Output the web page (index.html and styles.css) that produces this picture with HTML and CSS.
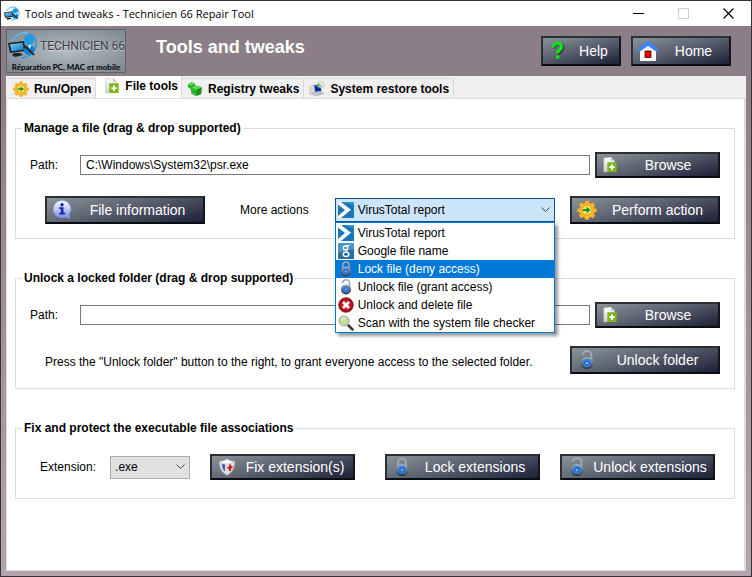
FILE: index.html
```html
<!DOCTYPE html>
<html lang="en">
<head>
    <meta charset="UTF-8">
    <meta name="viewport" content="width=device-width, initial-scale=1.0">
    <title>Tools and tweaks - Technicien 66 Repair Tool</title>
    <link rel="stylesheet" href="styles.css">
</head>
<body>
    <!-- shared icons -->
    <svg class="sprite" aria-hidden="true">
        <defs>
            <linearGradient id="g-blue" x1="0" y1="0" x2="1" y2="1"><stop offset="0" stop-color="#7cd4fc"/><stop offset="1" stop-color="#0a6cb8"/></linearGradient>
            <linearGradient id="g-steel" x1="0" y1="0" x2="0" y2="1"><stop offset="0" stop-color="#aab2ba"/><stop offset="1" stop-color="#2c3238"/></linearGradient>
            <linearGradient id="g-page" x1="0" y1="0" x2="0" y2="1"><stop offset="0" stop-color="#fff"/><stop offset="1" stop-color="#cfcfcf"/></linearGradient>
            <linearGradient id="g-info" x1="0" y1="0" x2="0" y2="1"><stop offset="0" stop-color="#fff"/><stop offset="1" stop-color="#7088e8"/></linearGradient>
            <radialGradient id="g-red"><stop offset="0" stop-color="#e83030"/><stop offset="1" stop-color="#a00c14"/></radialGradient>
        </defs>
        <symbol id="i-logo" viewBox="0 0 30 30">
            <path d="M5 9C9-1 27-1 28 12c0 9-6 14-14 15" fill="none" stroke="#1c9be6" stroke-width="1.400"/>
            <path d="M4 10C8 3 14 1 20 2" fill="none" stroke="#8cd4fa" stroke-width="1"/>
            <path d="M0 12l16-2 2 10-16 2z" fill="#16222c"/>
            <path d="M2 13.300l12.500-1.500 1.500 7-12.500 1.500z" fill="url(#g-blue)"/>
            <path d="M6 22h6l3 2-8 2-3-2z" fill="#16222c"/>
            <circle cx="21" cy="9" r="5" fill="#1c9be6"/>
            <path d="M16 21c0-5 2-7 5-7s6 2 6 5c-2 3-5 5-8 5z" fill="#1280d0"/>
            <path d="M17 15l9 9" stroke="#222c34" stroke-width="2"/>
            <path d="M20 14l1.500 4 2-4z" fill="#d8f0ff"/>
        </symbol>
        <symbol id="i-gear" viewBox="0 0 20 20">
            <path d="M8.300 1h3.400l.5 2.300 1.500.6 2-1.300 2.300 2.300-1.300 2 .6 1.500 2.200.5v2.800l-2.200.6-.6 1.500 1.300 2-2.300 2.300-2-1.300-1.500.6-.5 2.100H8.300l-.5-2.100-1.500-.6-2 1.300L2 15.800l1.300-2-.6-1.500L.5 11.700V8.900l2.200-.5.6-1.500-1.300-2 2.300-2.300 2 1.300 1.500-.6z" fill="#f8b82c" stroke="#e89a28" stroke-width=".6"/>
            <circle cx="10" cy="10" r="5" fill="#ffe35a" stroke="#e8a020"/>
            <path d="M6 9h3.500V6.800L13.800 10l-4.300 3.200V11H6z" fill="#16903c"/>
        </symbol>
        <symbol id="i-page" viewBox="0 0 16 18">
            <path d="M1 1l8-1 4 4v12l-12 1z" fill="url(#g-page)" stroke="#b4b4b4" stroke-width=".6"/>
            <path d="M9 0l.5 4H13z" fill="#bbb"/>
            <rect x="5" y="6" width="10.500" height="11" rx="1" fill="#7fb51a"/>
            <path d="M10.250 8.500v6M7.250 11.500h6" stroke="#fff" stroke-width="2"/>
        </symbol>
        <symbol id="i-cubes" viewBox="0 0 18 18">
            <path d="M1 4l4-3 4 2v4L5 9 1 7z" fill="#2aa82a"/>
            <path d="M1 4l4-3 4 2-4 2z" fill="#5fdc54"/>
            <path d="M4 8l6-3 7 2-1 8-6 2-5-3z" fill="#1c9420"/>
            <path d="M4 8l6-3 7 2-6 2.500z" fill="#5ce050"/>
            <path d="M4 8l7 1.500-1 7.500-5-3z" fill="#37be34"/>
            <path d="M6 11l4.500 1.500M13.500 8.500l-1 7.500" stroke="#0c6c14" stroke-width=".6"/>
        </symbol>
        <symbol id="i-restore" viewBox="0 0 18 18">
            <path d="M1 7l5-3v10l-5 1z" fill="#d8dadc" stroke="#9a9da0" stroke-width=".5"/>
            <path d="M5 4l8-1 2 9-8 1z" fill="#cfd3d8"/>
            <path d="M6 5l6-1 2 7-7 1z" fill="#0b22b8"/>
            <path d="M3 14l10-2 4 2-10 3z" fill="#c4c6c8" stroke="#8f9296" stroke-width=".5"/>
            <circle cx="13.500" cy="4" r="3.500" fill="#e4eee0" stroke="#a9b4a6" stroke-width=".6"/>
            <path d="M8 5.500L11 2v2c2 0 3 .5 3 2.500-1-1-2-1-3-.8V8z" fill="#37c434"/>
        </symbol>
        <symbol id="i-help" viewBox="0 0 20 20">
            <path d="M6.500 7.500C6 1.500 15.500 1.500 15 7c-.3 3-4 3-4 7" fill="none" stroke="#222" stroke-opacity=".6" stroke-width="3"/>
            <path d="M5.500 6.500C5 .8 14 .8 13.500 6c-.3 3-4 3-4 6.500" fill="none" stroke="#00ee10" stroke-width="3"/>
            <rect x="8" y="14.500" width="3.200" height="3.200" fill="#00ee10"/>
        </symbol>
        <symbol id="i-home" viewBox="0 0 20 20">
            <path d="M2 8l8-5 8 5v12H2z" fill="#fff"/>
            <path d="M10 0l9.500 7v4.500L10 5 .5 11.500V7z" fill="#3b82f6"/>
            <rect x="7" y="10" width="6" height="6.500" fill="#e80000" stroke="#4a0505" stroke-width=".8"/>
        </symbol>
        <symbol id="i-info" viewBox="0 0 18 18">
            <path d="M9 .5a8 7.700 0 0 1 6.500 12.200L16 17l-4-1.500A8 7.800 0 1 1 9 .5z" fill="url(#g-info)" stroke="#7e90d8" stroke-width=".5"/>
            <circle cx="9" cy="4.300" r="1.500" fill="#1426b0"/>
            <path d="M6.500 6.500h3.800v5h1.500V13H6.500v-1.500H8V8H6.500z" fill="#1426b0"/>
        </symbol>
        <symbol id="i-virustotal" viewBox="0 0 16 16">
            <path d="M0 0h16v16H0z" fill="#1a78b8"/>
            <path d="M0 0h3l10 7.800L3 16H0v-2l7-6-7-5.500z" fill="#fff"/>
            <path d="M5 0h11v3zM5 16l9-7.500" fill="#3a96cc"/>
        </symbol>
        <symbol id="i-google" viewBox="0 0 16 16">
            <rect width="16" height="16" rx="1" fill="#4a94c6"/>
            <path d="M0 10L16 6v10H0z" fill="#2a6fa4"/>
            <ellipse cx="7.500" cy="5" rx="2.200" ry="2" fill="none" stroke="#fff" stroke-width="1.400"/>
            <ellipse cx="8" cy="11.300" rx="2.900" ry="2.200" fill="none" stroke="#fff" stroke-width="1.400"/>
            <path d="M8 2.500h4M8 7l1 2" stroke="#fff" stroke-width="1.200"/>
        </symbol>
        <symbol id="i-lock" viewBox="0 0 16 18">
            <path d="M4.500 9V5a3.500 3.800 0 0 1 7 0v4" fill="none" stroke="#a3abb2" stroke-width="1.700"/>
            <ellipse cx="8" cy="11.800" rx="5.800" ry="5.600" fill="url(#g-steel)"/>
            <circle cx="8" cy="11.800" r="3.600" fill="#2c7cf0"/>
            <circle cx="8" cy="11.800" r="1.600" fill="#9ab0c8" stroke="#155bc8" stroke-width=".8"/>
        </symbol>
        <symbol id="i-unlock" viewBox="0 0 16 18">
            <path d="M4 4.500C5-.3 12-.3 12 5v4" fill="none" stroke="#a3abb2" stroke-width="1.700"/>
            <ellipse cx="8" cy="11.800" rx="5.800" ry="5.600" fill="url(#g-steel)"/>
            <circle cx="8" cy="11.800" r="3.600" fill="#2c7cf0"/>
            <circle cx="8" cy="11.800" r="1.600" fill="#9ab0c8" stroke="#155bc8" stroke-width=".8"/>
        </symbol>
        <symbol id="i-delete" viewBox="0 0 16 16">
            <circle cx="8" cy="8" r="7.300" fill="url(#g-red)" stroke="#8c1016" stroke-width=".8"/>
            <path d="M5 5l6 6M11 5l-6 6" stroke="#fff" stroke-width="2.600"/>
        </symbol>
        <symbol id="i-scan" viewBox="0 0 16 16">
            <path d="M9.500 9.500l5 5" stroke="#3a3a3a" stroke-width="2.600" stroke-linecap="round"/>
            <circle cx="6" cy="6" r="4.800" fill="#bfe08c" stroke="#b8bcb8" stroke-width="1.800"/>
            <path d="M3.500 5.500C4 3.500 6 3 7.500 3.500" fill="none" stroke="#fff"/>
        </symbol>
        <symbol id="i-shield" viewBox="0 0 20 20">
            <path d="M2 4c3 0 5-.5 8-2.500C13 3.500 15 4 18 4c0 7-2 11-8 14.500C4 15 2 11 2 4z" fill="#d9d9dc" stroke="#8e9298" stroke-width=".7"/>
            <path d="M5 7l3 .5v7C6 13 5 10 5 7z" fill="#3c5cb4"/>
            <path d="M13 7.500V14M10.500 11l5-1" stroke="#d01818" stroke-width="2"/>
            <path d="M4 5l6-2 6 2-6 1.500z" fill="#fff"/>
        </symbol>
    </svg>

    <div class="window">
        <header class="titlebar">
            <svg class="titlebar-icon"><use href="#i-logo"/></svg>
            <span class="titlebar-text">Tools and tweaks - Technicien 66 Repair Tool</span>
            <button class="caption-btn" type="button" aria-label="Minimize"><svg viewBox="0 0 11 11"><path d="M0 5.500h11" stroke="#000"/></svg></button>
            <button class="caption-btn" type="button" aria-label="Maximize" disabled><svg viewBox="0 0 11 11"><path d="M.5.5h10v10H.5z" fill="none" stroke="#ccc"/></svg></button>
            <button class="caption-btn" type="button" aria-label="Close"><svg viewBox="0 0 11 11"><path d="M.5.5l10 10M10.500.5l-10 10" stroke="#000" stroke-width="1.200"/></svg></button>
        </header>

        <div class="banner">
            <div class="logo">
                <div class="logo-top">
                    <svg class="logo-icon"><use href="#i-logo"/></svg>
                    <span class="logo-name">TECHNICIEN 66</span>
                </div>
                <span class="logo-sub">Réparation PC, MAC et mobile</span>
            </div>
            <h1>Tools and tweaks</h1>
            <div class="banner-buttons">
                <button class="btn btn-help" type="button"><svg class="icon-lg"><use href="#i-help"/></svg><span>Help</span></button>
                <button class="btn btn-home" type="button"><svg class="icon-lg"><use href="#i-home"/></svg><span>Home</span></button>
            </div>
        </div>

        <nav class="tabs" role="tablist">
            <button class="tab" type="button" role="tab"><svg class="icon"><use href="#i-gear"/></svg>Run/Open</button>
            <button class="tab active" type="button" role="tab" aria-selected="true"><svg class="icon"><use href="#i-page"/></svg>File tools</button>
            <button class="tab" type="button" role="tab"><svg class="icon"><use href="#i-cubes"/></svg>Registry tweaks</button>
            <button class="tab" type="button" role="tab"><svg class="icon"><use href="#i-restore"/></svg>System restore tools</button>
        </nav>

        <main class="panel">
            <fieldset class="group">
                <legend>Manage a file (drag &amp; drop supported)</legend>
                <div class="row path-row">
                    <label for="file-path">Path:</label>
                    <input class="path" id="file-path" type="text" value="C:\Windows\System32\psr.exe">
                    <button class="btn btn-browse" type="button"><svg class="icon"><use href="#i-page"/></svg><span>Browse</span></button>
                </div>
                <div class="row action-row">
                    <button class="btn btn-info" type="button"><svg class="icon-lg"><use href="#i-info"/></svg><span>File information</span></button>
                    <label class="more-label" for="more-actions">More actions</label>
                    <div class="combo">
                        <svg class="icon"><use href="#i-virustotal"/></svg>
                        <select id="more-actions">
                            <option>VirusTotal report</option>
                            <option>Google file name</option>
                            <option>Lock file (deny access)</option>
                            <option>Unlock file (grant access)</option>
                            <option>Unlock and delete file</option>
                            <option>Scan with the system file checker</option>
                        </select>
                        <svg class="arrow" viewBox="0 0 9 6"><path d="M.5.500l4 4 4-4" fill="none" stroke="#444"/></svg>
                        <ul class="menu" role="listbox" aria-label="More actions">
                            <li role="option"><svg class="icon"><use href="#i-virustotal"/></svg>VirusTotal report</li>
                            <li role="option"><svg class="icon"><use href="#i-google"/></svg>Google file name</li>
                            <li role="option" class="selected" aria-selected="true"><svg class="icon"><use href="#i-lock"/></svg>Lock file (deny access)</li>
                            <li role="option"><svg class="icon"><use href="#i-unlock"/></svg>Unlock file (grant access)</li>
                            <li role="option"><svg class="icon"><use href="#i-delete"/></svg>Unlock and delete file</li>
                            <li role="option"><svg class="icon"><use href="#i-scan"/></svg>Scan with the system file checker</li>
                        </ul>
                    </div>
                    <button class="btn btn-action" type="button"><svg class="icon-lg"><use href="#i-gear"/></svg><span>Perform action</span></button>
                </div>
            </fieldset>

            <fieldset class="group">
                <legend>Unlock a locked folder (drag &amp; drop supported)</legend>
                <div class="row path-row">
                    <label for="folder-path">Path:</label>
                    <input class="path" id="folder-path" type="text">
                    <button class="btn btn-browse" type="button"><svg class="icon"><use href="#i-page"/></svg><span>Browse</span></button>
                </div>
                <div class="row action-row">
                    <p>Press the "Unlock folder" button to the right, to grant everyone access to the selected folder.</p>
                    <button class="btn btn-action" type="button"><svg class="icon-lg"><use href="#i-unlock"/></svg><span>Unlock folder</span></button>
                </div>
            </fieldset>

            <fieldset class="group group-ext">
                <legend>Fix and protect the executable file associations</legend>
                <div class="row ext-row">
                    <label for="extension">Extension:</label>
                    <div class="combo combo-ext">
                        <select id="extension">
                            <option>.exe</option>
                        </select>
                        <svg class="arrow" viewBox="0 0 9 6"><path d="M.5.500l4 4 4-4" fill="none" stroke="#444"/></svg>
                    </div>
                    <button class="btn btn-fix" type="button"><svg class="icon-lg"><use href="#i-shield"/></svg><span>Fix extension(s)</span></button>
                    <button class="btn btn-ext" type="button"><svg class="icon-lg"><use href="#i-lock"/></svg><span>Lock extensions</span></button>
                    <button class="btn btn-ext" type="button"><svg class="icon-lg"><use href="#i-unlock"/></svg><span>Unlock extensions</span></button>
                </div>
            </fieldset>
        </main>
    </div>
</body>
</html>
```

FILE: styles.css
```css
* {
    box-sizing: border-box;
}
body {
    margin: 0;
    padding: 1px;
    min-height: 100vh;
    display: flex;
    background-color: #3a3238;
    font-family: "Liberation Sans", Arial, sans-serif;
    font-size: 12px;
    color: #000;
}
button, input, select {
    font: inherit;
    color: inherit;
}
svg {
    display: block;
    flex: none;
}
.sprite {
    position: absolute;
    width: 0;
    height: 0;
}
.icon {
    width: 16px;
    height: 16px;
}
.icon-lg {
    width: 20px;
    height: 20px;
}

.window {
    flex: 1;
    display: flex;
    flex-direction: column;
    padding: 0 5px 5px;
    background: linear-gradient(#8c7e86, #8c7e86 80px, #b3a5ae);
}

/* title bar */
.titlebar {
    display: flex;
    align-items: center;
    height: 25px;
    margin: 0 -5px;
    padding-left: 3px;
    background-color: #fff;
    font-family: "Open Sans", "Noto Sans", sans-serif;
    font-size: 11px;
}
.titlebar-icon {
    width: 16px;
    height: 16px;
    margin-right: 5px;
}
.titlebar-text {
    flex: 1;
}
.caption-btn {
    width: 45px;
    height: 25px;
    padding: 0 17px;
    border: 0;
    background: none;
}
.caption-btn svg {
    width: 11px;
    height: 11px;
}

/* banner */
.banner {
    display: flex;
    height: 50px;
    padding-top: 3px;
}
.logo {
    width: 120px;
    height: 44px;
    border: 1px solid #5c6468;
    background: radial-gradient(#b4bcc4, #7c868e);
    text-align: center;
    white-space: nowrap;
}
.logo-top {
    display: flex;
    align-items: center;
    height: 32px;
}
.logo-icon {
    width: 30px;
    height: 30px;
    margin: 0 2px 0 1px;
}
.logo-name {
    font-family: Roboto, sans-serif;
    font-size: 12px;
    color: #3c3c40;
    text-shadow: 0 1px 1px #d8dce0;
}
.logo-sub {
    display: block;
    font: bold 8px/10px Lato, sans-serif;
}
.banner h1 {
    flex: 1;
    margin: 8px 0 0 30px;
    font-size: 18px;
    line-height: 20px;
    color: #fff;
}
.banner-buttons {
    display: flex;
    gap: 10px;
    padding: 7px 15px 0 0;
}

/* dark buttons */
.btn {
    display: flex;
    align-items: center;
    height: 28px;
    padding: 0 5px;
    border: 2px solid;
    border-color: #2c3034 #14161c #0a0c14 #2c3034;
    background: linear-gradient(165deg, #8a949a, #5c6270 45%, #1c2036);
    color: #fff;
    font-size: 14px;
    white-space: nowrap;
}
.btn span {
    flex: 1;
    padding-left: 5px;
    text-align: center;
}
.btn-help {
    width: 80px;
    height: 30px;
}
.btn-home {
    width: 100px;
    height: 30px;
}
.btn-browse {
    width: 125px;
    height: 26px;
}
.btn-info {
    width: 160px;
}
.btn-action {
    width: 150px;
    margin-left: auto;
}

/* tabs */
.tabs {
    display: flex;
    align-items: flex-end;
    height: 22px;
    padding-left: 2px;
    background-color: #f0f0f0;
}
.tab {
    display: flex;
    align-items: center;
    gap: 5px;
    height: 20px;
    padding: 0 4px 0 5px;
    border: 1px solid #d9d9d9;
    border-width: 1px 1px 0 0;
    background-color: #f0f0f0;
    font-weight: bold;
    white-space: nowrap;
}
.tab.active {
    height: 22px;
    padding: 0 3px 3px 8px;
    border-top-color: #fff;
    background-color: #fff;
}

.panel {
    flex: 1;
    padding: 22px 9px 0 8px;
    border: 1px solid #dcdcdc;
    border-right-width: 2px;
    background-color: #fff;
}

/* groups */
.group {
    margin: 0 0 32px;
    padding: 16px 14px 14px;
    border: 1px solid #dcdcdc;
}
.group legend {
    margin-left: -8px;
    padding: 0 2px;
    font-weight: bold;
    line-height: 15px;
}
.row {
    display: flex;
    align-items: center;
}
.path-row label {
    width: 50px;
}
.path {
    flex: 1;
    min-width: 0;
    height: 20px;
    margin-right: 5px;
    padding: 0 5px;
    border: 1px solid #7a7a7a;
    background-color: #fff;
}
.action-row {
    margin-top: 18px;
    padding-left: 15px;
}
.action-row p {
    margin: 4px 0 0;
}
.more-label {
    margin-left: 35px;
}

/* drop-downs */
.combo {
    position: relative;
    display: flex;
    align-items: center;
    width: 220px;
    height: 24px;
    margin-left: 26px;
    padding: 0 4px 0 2px;
    border: 1px solid #005499;
    background-color: #cce4f7;
}
.combo select {
    flex: 1;
    min-width: 0;
    padding: 0 0 0 4px;
    border: 0;
    background: none;
    appearance: none;
    outline: none;
}
.arrow {
    width: 9px;
    height: 6px;
}
.combo-ext {
    width: 80px;
    height: 23px;
    margin-left: 14px;
    padding: 0 4px 0 0;
    border-color: #adadad;
    background-color: #e1e1e1;
}
.menu {
    position: absolute;
    top: calc(100% + 1px);
    left: -1px;
    right: -1px;
    z-index: 2;
    margin: 0;
    padding: 1px 0 0;
    border: 1px solid #0078d7;
    background-color: #fff;
    box-shadow: 3px 3px 3px rgba(0, 0, 0, 0.4);
    list-style: none;
}
.menu li {
    display: flex;
    align-items: center;
    gap: 4px;
    height: 18px;
    padding-left: 2px;
    white-space: nowrap;
}
.menu .selected {
    background-color: #0078d7;
    color: #fff;
}

/* extensions */
.group-ext {
    margin-bottom: 0;
    padding: 18px 4px 18px 24px;
}
.group-ext legend {
    margin-left: -18px;
}
.ext-row .btn {
    height: 26px;
}
.btn-fix {
    width: 145px;
    margin-left: 20px;
}
.btn-ext {
    width: 155px;
    margin-left: 30px;
}
.ext-row .btn-ext + .btn-ext {
    margin-left: 20px;
}
```
